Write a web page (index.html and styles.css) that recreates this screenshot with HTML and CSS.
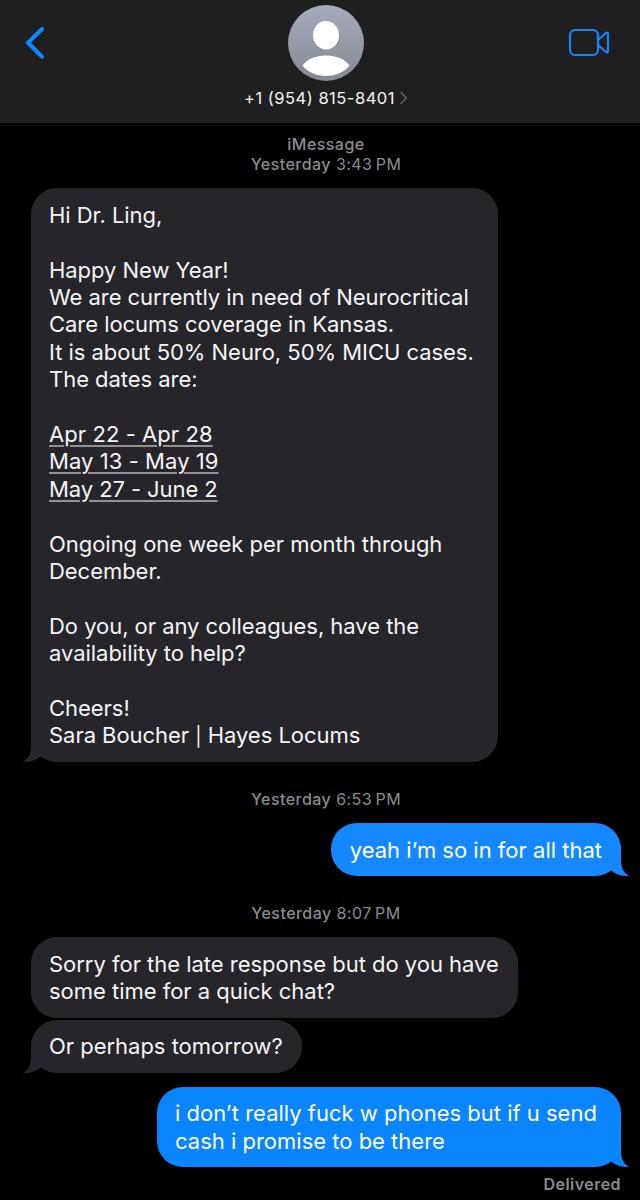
FILE: index.html
```html
<!DOCTYPE html>
<html lang="en">
<head>
    <meta charset="utf-8">
    <title>Messages</title>
    <link rel="stylesheet" href="styles.css">
</head>
<body>
    <header class="header">
        <svg class="back" width="22" height="36" viewBox="0 0 22 36">
            <path d="M19 4 L5 17.8 L19 31.8"/>
        </svg>
        <div class="contact">
            <svg class="avatar" width="76" height="76" viewBox="0 0 76 76">
                <defs>
                    <linearGradient id="avatar-bg" x1="0" y1="0" x2="0" y2="1">
                        <stop offset="0" stop-color="#a5abb9"/>
                        <stop offset="1" stop-color="#858992"/>
                    </linearGradient>
                </defs>
                <circle cx="38" cy="38" r="38" fill="url(#avatar-bg)"/>
                <ellipse cx="38" cy="30.2" rx="13" ry="14.2" fill="#fff"/>
                <path d="M14.5 60.5 C19 54 28 50.5 38 50.5 S57 54 61.5 60.5 C57 66.5 48 71 38 71 S19 66.5 14.5 60.5 Z" fill="#fff"/>
            </svg>
            <div class="number">
                <span>+1 (954) 815-8401</span>
                <svg class="more" width="8" height="12" viewBox="0 0 8 12">
                    <path d="M1.2 0.8 L6.3 6 L1.2 11.2"/>
                </svg>
            </div>
        </div>
        <svg class="video" width="42" height="30" viewBox="0 0 42 30">
            <rect x="2" y="2" width="28" height="25" rx="5"/>
            <path d="M30 12 L38 5 Q40 4 40 6 V23 Q40 25 38 24 L30 17"/>
        </svg>
    </header>

    <main class="thread">
        <div class="stamp first"><b>iMessage</b><br><b>Yesterday</b> 3:43&#8201;PM</div>

        <div class="bubble received long">
            Hi Dr. Ling,<br>
            <br>
            Happy New Year!<br>
            We are currently in need of Neurocritical<br>
            Care locums coverage in Kansas.<br>
            It is about 50% Neuro, 50% MICU cases.<br>
            The dates are:<br>
            <br>
            <span class="date">Apr 22 - Apr 28</span><br>
            <span class="date">May 13 - May 19</span><br>
            <span class="date last">May 27 - June 2</span><br>
            <br>
            Ongoing one week per month through<br>
            December.<br>
            <br>
            Do you, or any colleagues, have the<br>
            availability to help?<br>
            <br>
            Cheers!<br>
            Sara Boucher <span class="bar">|</span> Hayes Locums
            <svg class="tail" width="20" height="30" viewBox="0 0 20 30"><path d="M9 0 V14 C9 22 6 28 0.5 29.5 C7 30.8 13 29 19 24.5 V0 Z"/></svg>
        </div>

        <div class="stamp second"><b>Yesterday</b> 6:53&#8201;PM</div>

        <div class="bubble sent light">
            yeah i’m so in for all that
            <svg class="tail" width="20" height="30" viewBox="0 0 20 30"><path d="M9 0 V14 C9 22 6 28 0.5 29.5 C7 30.8 13 29 19 24.5 V0 Z"/></svg>
        </div>

        <div class="stamp third"><b>Yesterday</b> 8:07&#8201;PM</div>

        <div class="bubble received wide">
            Sorry for the late response but do you have<br>
            some time for a quick chat?
        </div>
        <div class="bubble received follow">
            Or perhaps tomorrow?
            <svg class="tail" width="20" height="30" viewBox="0 0 20 30"><path d="M9 0 V14 C9 22 6 28 0.5 29.5 C7 30.8 13 29 19 24.5 V0 Z"/></svg>
        </div>

        <div class="bubble sent reply">
            i don’t really fuck w phones but if u send<br>
            cash i promise to be there
            <svg class="tail" width="20" height="30" viewBox="0 0 20 30"><path d="M9 0 V14 C9 22 6 28 0.5 29.5 C7 30.8 13 29 19 24.5 V0 Z"/></svg>
        </div>
        <div class="status">Delivered</div>
    </main>
</body>
</html>
```
FILE: styles.css
```css
* {
    box-sizing: border-box;
}

body {
    margin: 0;
    height: 1200px;
    overflow: hidden;
    background-color: #000;
    color: #f5f5f7;
    font-family: Inter, "Liberation Sans", sans-serif;
}

svg {
    display: block;
    fill: none;
    stroke-linecap: round;
    stroke-linejoin: round;
}

.header {
    display: grid;
    grid-template-columns: 1fr 200px 1fr;
    height: 123px;
    padding: 5px 30px 0 23px;
    background-color: #1f1f1f;
    border-bottom: 1px solid #242424;
}

.back {
    margin-top: 20px;
    stroke: #1286ff;
    stroke-width: 4.2;
}

.contact {
    display: flex;
    flex-direction: column;
    align-items: center;
    margin: 0 -9.5px 0 9.5px;
}

.number {
    display: flex;
    align-items: center;
    gap: 5px;
    margin-top: 7px;
    font-size: 16.5px;
    line-height: 20px;
    letter-spacing: 0.5px;
}

.more {
    stroke: #68686b;
    stroke-width: 1.4;
}

.video {
    justify-self: end;
    margin-top: 23px;
    stroke: #1286ff;
    stroke-width: 2.2;
}

.thread {
    display: flex;
    flex-direction: column;
    align-items: flex-start;
    padding: 11px 19px 0 31px;
}

.stamp {
    align-self: center;
    color: #8b8b90;
    font-size: 16px;
    line-height: 20px;
    letter-spacing: 0.45px;
}

.stamp b {
    font-weight: 500;
}

.first {
    margin-bottom: 14px;
    text-align: center;
}

.second,
.third {
    margin: 27px 0 14px;
}

.bubble {
    position: relative;
    padding: 13.5px 19px 12.5px 18px;
    border-radius: 26px;
    font-size: 22px;
    line-height: 27.4px;
    letter-spacing: -0.02px;
    white-space: nowrap;
}

.received {
    background-color: #26252a;
}

.received .tail {
    fill: #26252a;
}

.long {
    width: 467px;
    height: 574px;
    padding-top: 13.7px;
    letter-spacing: -0.04px;
}

.wide {
    width: 487px;
}

.sent {
    align-self: flex-end;
    padding-left: 19px;
    background-color: #0b84ff;
    color: #fff;
    letter-spacing: 0;
}

.sent .tail {
    fill: #0b84ff;
}

.light {
    background-color: #1688ff;
}

.light .tail {
    fill: #1688ff;
}

.follow {
    margin-top: 1.5px;
}

.reply {
    width: 464px;
    margin-top: 13.5px;
    padding-left: 18px;
}

.tail {
    position: absolute;
    bottom: 0;
    left: -9px;
}

.sent .tail {
    left: auto;
    right: -9px;
    transform: scaleX(-1);
}

.date {
    letter-spacing: 0.07px;
    text-decoration: underline;
    text-decoration-color: #929195;
    text-decoration-thickness: 1.5px;
    text-underline-offset: 2.5px;
}

.last {
    letter-spacing: -0.08px;
}

.bar {
    font-size: 19px;
    line-height: 1;
}

.status {
    align-self: flex-end;
    margin-top: 7px;
    color: #8b8b90;
    font-size: 16px;
    font-weight: 600;
    line-height: 20px;
    letter-spacing: 0.45px;
}
```
